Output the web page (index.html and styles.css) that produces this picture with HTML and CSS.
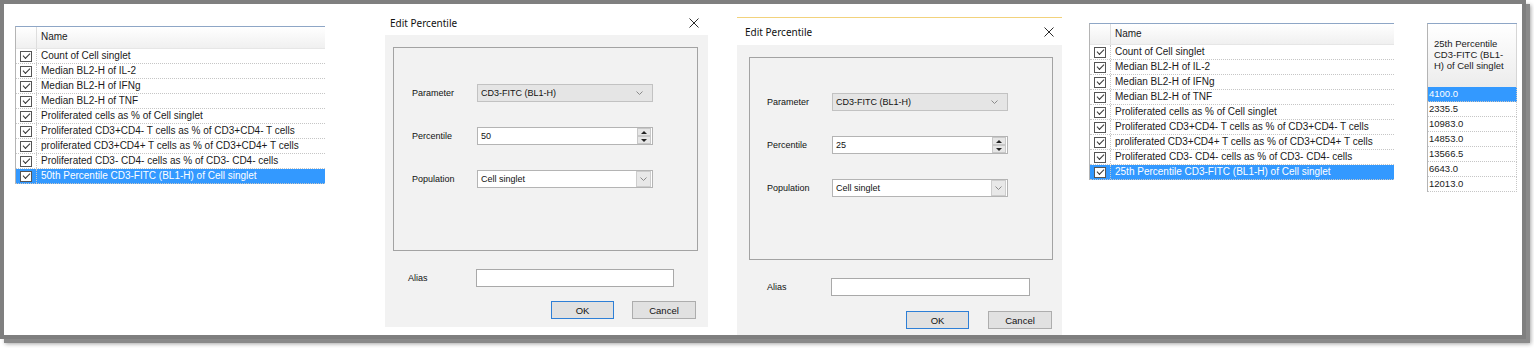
FILE: index.html
```html
<!DOCTYPE html>
<html lang="en">
<head>
    <meta charset="UTF-8">
    <meta name="viewport" content="width=device-width, initial-scale=1.0">
    <title>Edit Percentile</title>
    <link rel="stylesheet" href="styles.css">
</head>
<body>
<div class="frame">
    <div class="canvas">

        <!-- statistics list, before -->
        <div class="grid grid-a">
            <div class="grid-head"><span class="cb-col"></span><span class="name-col">Name</span></div>
            <div class="row"><span class="cb-col"><span class="cb"></span></span><span class="name-col">Count of Cell singlet</span></div>
            <div class="row"><span class="cb-col"><span class="cb"></span></span><span class="name-col">Median BL2-H of IL-2</span></div>
            <div class="row"><span class="cb-col"><span class="cb"></span></span><span class="name-col">Median BL2-H of IFNg</span></div>
            <div class="row"><span class="cb-col"><span class="cb"></span></span><span class="name-col">Median BL2-H of TNF</span></div>
            <div class="row"><span class="cb-col"><span class="cb"></span></span><span class="name-col">Proliferated cells as % of Cell singlet</span></div>
            <div class="row"><span class="cb-col"><span class="cb"></span></span><span class="name-col">Proliferated CD3+CD4- T cells as % of CD3+CD4- T cells</span></div>
            <div class="row"><span class="cb-col"><span class="cb"></span></span><span class="name-col">proliferated CD3+CD4+ T cells as % of CD3+CD4+ T cells</span></div>
            <div class="row"><span class="cb-col"><span class="cb"></span></span><span class="name-col">Proliferated CD3- CD4- cells as % of CD3- CD4- cells</span></div>
            <div class="row sel"><span class="cb-col"><span class="cb"></span></span><span class="name-col">50th Percentile CD3-FITC (BL1-H) of Cell singlet</span></div>
        </div>

        <!-- dialog, 50th -->
        <div class="dialog d1">
            <div class="title">
                <span>Edit Percentile</span>
                <svg class="close" width="10" height="10" viewBox="0 0 10 10"><path d="M0.5 0.5L9.5 9.5M9.5 0.5L0.5 9.5" stroke="#2b2b2b" stroke-width="1"/></svg>
            </div>
            <div class="body">
                <div class="group">
                    <div class="field">
                        <label>Parameter</label>
                        <div class="ctl combo">
                            <span>CD3-FITC (BL1-H)</span>
                            <svg class="chev" width="7" height="4" viewBox="0 0 7 4"><path d="M0.5 0.5L3.5 3.5L6.5 0.5" fill="none" stroke="#8a8a8a"/></svg>
                        </div>
                    </div>
                    <div class="field">
                        <label>Percentile</label>
                        <div class="ctl">
                            <span>50</span>
                            <span class="spin"><span class="up"></span><span class="down"></span></span>
                        </div>
                    </div>
                    <div class="field">
                        <label>Population</label>
                        <div class="ctl">
                            <span>Cell singlet</span>
                            <span class="drop"><svg width="7" height="4" viewBox="0 0 7 4"><path d="M0.5 0.5L3.5 3.5L6.5 0.5" fill="none" stroke="#8a8a8a"/></svg></span>
                        </div>
                    </div>
                </div>
                <div class="alias">
                    <label>Alias</label>
                    <div class="ctl"></div>
                </div>
                <div class="buttons">
                    <button class="btn ok">OK</button>
                    <button class="btn">Cancel</button>
                </div>
            </div>
        </div>

        <!-- dialog, 25th -->
        <div class="dialog d2">
            <div class="title">
                <span>Edit Percentile</span>
                <svg class="close" width="10" height="10" viewBox="0 0 10 10"><path d="M0.5 0.5L9.5 9.5M9.5 0.5L0.5 9.5" stroke="#2b2b2b" stroke-width="1"/></svg>
            </div>
            <div class="body">
                <div class="group">
                    <div class="field">
                        <label>Parameter</label>
                        <div class="ctl combo">
                            <span>CD3-FITC (BL1-H)</span>
                            <svg class="chev" width="7" height="4" viewBox="0 0 7 4"><path d="M0.5 0.5L3.5 3.5L6.5 0.5" fill="none" stroke="#8a8a8a"/></svg>
                        </div>
                    </div>
                    <div class="field">
                        <label>Percentile</label>
                        <div class="ctl">
                            <span>25</span>
                            <span class="spin"><span class="up"></span><span class="down"></span></span>
                        </div>
                    </div>
                    <div class="field">
                        <label>Population</label>
                        <div class="ctl">
                            <span>Cell singlet</span>
                            <span class="drop"><svg width="7" height="4" viewBox="0 0 7 4"><path d="M0.5 0.5L3.5 3.5L6.5 0.5" fill="none" stroke="#8a8a8a"/></svg></span>
                        </div>
                    </div>
                </div>
                <div class="alias">
                    <label>Alias</label>
                    <div class="ctl"></div>
                </div>
                <div class="buttons">
                    <button class="btn ok">OK</button>
                    <button class="btn">Cancel</button>
                </div>
            </div>
        </div>

        <!-- statistics list, after -->
        <div class="grid grid-b">
            <div class="grid-head"><span class="cb-col"></span><span class="name-col">Name</span></div>
            <div class="row"><span class="cb-col"><span class="cb"></span></span><span class="name-col">Count of Cell singlet</span></div>
            <div class="row"><span class="cb-col"><span class="cb"></span></span><span class="name-col">Median BL2-H of IL-2</span></div>
            <div class="row"><span class="cb-col"><span class="cb"></span></span><span class="name-col">Median BL2-H of IFNg</span></div>
            <div class="row"><span class="cb-col"><span class="cb"></span></span><span class="name-col">Median BL2-H of TNF</span></div>
            <div class="row"><span class="cb-col"><span class="cb"></span></span><span class="name-col">Proliferated cells as % of Cell singlet</span></div>
            <div class="row"><span class="cb-col"><span class="cb"></span></span><span class="name-col">Proliferated CD3+CD4- T cells as % of CD3+CD4- T cells</span></div>
            <div class="row"><span class="cb-col"><span class="cb"></span></span><span class="name-col">proliferated CD3+CD4+ T cells as % of CD3+CD4+ T cells</span></div>
            <div class="row"><span class="cb-col"><span class="cb"></span></span><span class="name-col">Proliferated CD3- CD4- cells as % of CD3- CD4- cells</span></div>
            <div class="row sel"><span class="cb-col"><span class="cb"></span></span><span class="name-col">25th Percentile CD3-FITC (BL1-H) of Cell singlet</span></div>
        </div>

        <!-- results column -->
        <div class="vals">
            <div class="vals-head">25th Percentile<br>CD3-FITC (BL1-<br>H) of Cell singlet</div>
            <div class="val sel">4100.0</div>
            <div class="val">2335.5</div>
            <div class="val">10983.0</div>
            <div class="val">14853.0</div>
            <div class="val">13566.5</div>
            <div class="val">6643.0</div>
            <div class="val">12013.0</div>
        </div>

    </div>
</div>
</body>
</html>
```

FILE: styles.css
```css
* {
    margin: 0;
    padding: 0;
    box-sizing: border-box;
}

body {
    min-height: 348px;
    background: #fff;
    font-family: "Liberation Sans", Arial, sans-serif;
    font-size: 10px;
    color: #1a1a1a;
}

.frame {
    width: 1526px;
    height: 339px;
    border: 4px solid #7f7f7f;
    box-shadow: 4px 4px 0 #8a8a8a, 5px 5px 4px rgba(0, 0, 0, 0.35);
}

.canvas {
    display: flex;
    align-items: flex-start;
    height: 100%;
    background: #fff;
}

/* lists */
.grid {
    flex: none;
    border-top: 1px solid #8ea6c6;
    border-left: 1px solid #b4b4b4;
}

.grid-a {
    width: 310px;
    margin: 22px 0 0 11px;
}

.grid-b {
    width: 305px;
    margin: 19px 0 0 27px;
}

.grid-head {
    display: flex;
    height: 22px;
    background: linear-gradient(#fff, #f0f0f0);
    border-bottom: 1px solid #e6e6e6;
}

.grid-b .grid-head {
    height: 21px;
}

.grid-head .cb-col {
    border-right: 1px solid #dedede;
}

.grid-head .name-col {
    line-height: 20px;
}

.cb-col {
    width: 21px;
    flex: none;
    display: flex;
    align-items: center;
    justify-content: center;
}

.name-col {
    padding-left: 4px;
    white-space: nowrap;
}

.row {
    display: flex;
    height: 15px;
    line-height: 14px;
    border-bottom: 1px dotted #c6c6c6;
}

.row .cb-col {
    border-right: 1px dotted #c6c6c6;
}

.row.sel {
    background: #3399ff;
    color: #fff;
}

.cb {
    position: relative;
    width: 12px;
    height: 11px;
    border: 1px solid #555;
    background: #fff;
}

.cb::after {
    content: "";
    position: absolute;
    left: 2px;
    top: 1px;
    width: 6px;
    height: 3px;
    border-left: 1px solid #333;
    border-bottom: 1px solid #333;
    transform: rotate(-45deg);
}

/* dialogs */
.dialog {
    flex: none;
    font-size: 9px;
    color: #111;
}

.d1 {
    width: 323px;
    margin: 6px 0 0 60px;
}

.d2 {
    width: 325px;
    margin: 13px 0 0 29px;
    border-top: 1px solid #f2d27c;
}

.title {
    display: flex;
    justify-content: space-between;
    align-items: center;
    height: 25px;
    padding: 0 9px 0 5px;
    background: #fff;
    font-family: "Noto Sans", sans-serif;
    font-size: 10px;
    color: #111;
}

.d2 .title {
    height: 27px;
    padding: 0 8px 0 8px;
}

.body {
    height: 292px;
    padding: 12px 10px 0 8px;
    background: #f2f2f2;
}

.d2 .body {
    height: 290px;
    padding: 12px 9px 0 12px;
}

.group {
    display: flex;
    flex-direction: column;
    gap: 25px;
    height: 204px;
    padding: 36px 0 0 18px;
    border: 1px solid #a3a3a3;
}

.d2 .group {
    height: 203px;
    padding: 35px 0 0 17px;
}

.field {
    display: flex;
    align-items: center;
}

.field label {
    width: 65px;
}

.ctl {
    display: flex;
    align-items: center;
    justify-content: space-between;
    width: 176px;
    height: 18px;
    padding-left: 3px;
    border: 1px solid #b4b4b4;
    background: #fff;
}

.combo {
    padding-right: 9px;
    background: #e5e5e5;
    border-color: #c2c2c2;
}

.spin {
    display: flex;
    flex-direction: column;
    width: 14px;
    height: 16px;
    margin-right: 1px;
}

.spin span {
    flex: 1;
    display: flex;
    align-items: center;
    justify-content: center;
    background: #e6e6e6;
    border: 1px solid #c8c8c8;
}

.spin .up::before {
    content: "";
    border-left: 3px solid transparent;
    border-right: 3px solid transparent;
    border-bottom: 3px solid #222;
}

.spin .down::before {
    content: "";
    border-left: 3px solid transparent;
    border-right: 3px solid transparent;
    border-top: 3px solid #222;
}

.drop {
    display: flex;
    align-items: center;
    justify-content: center;
    width: 15px;
    height: 16px;
    margin-right: 1px;
    background: #e8e8e8;
    border: 1px solid #cdcdcd;
}

.alias {
    display: flex;
    align-items: center;
    margin: 18px 0 0 15px;
}

.alias label {
    width: 68px;
}

.alias .ctl {
    width: 198px;
    border-color: #a9a9a9;
}

.d2 .alias {
    margin-left: 18px;
}

.d2 .alias label {
    width: 64px;
}

.d2 .alias .ctl {
    width: 199px;
}

.buttons {
    display: flex;
    justify-content: flex-end;
    gap: 18px;
    margin: 14px 2px 0 0;
}

.d2 .buttons {
    gap: 19px;
    margin: 15px 1px 0 0;
}

.btn {
    width: 64px;
    height: 18px;
    border: 1px solid #adadad;
    background: #e1e1e1;
    font-family: "Liberation Sans", Arial, sans-serif;
    font-size: 9.5px;
    color: #111;
}

.btn.ok {
    width: 63px;
    border-color: #2e7fd6;
}

/* result column */
.vals {
    flex: none;
    width: 90px;
    margin: 19px 0 0 33px;
    border-top: 1px solid #8ea6c6;
    border-left: 1px solid #b4b4b4;
    font-size: 9.5px;
}

.vals-head {
    height: 63px;
    padding: 14px 0 0 6px;
    line-height: 11px;
    background: linear-gradient(#fff, #ececec);
    border-right: 1px solid #d6d6d6;
}

.val {
    height: 15px;
    line-height: 14px;
    padding-left: 1px;
    border-bottom: 1px dotted #c6c6c6;
    border-right: 1px dotted #c6c6c6;
}

.val.sel {
    background: #3399ff;
    color: #fff;
}
```
